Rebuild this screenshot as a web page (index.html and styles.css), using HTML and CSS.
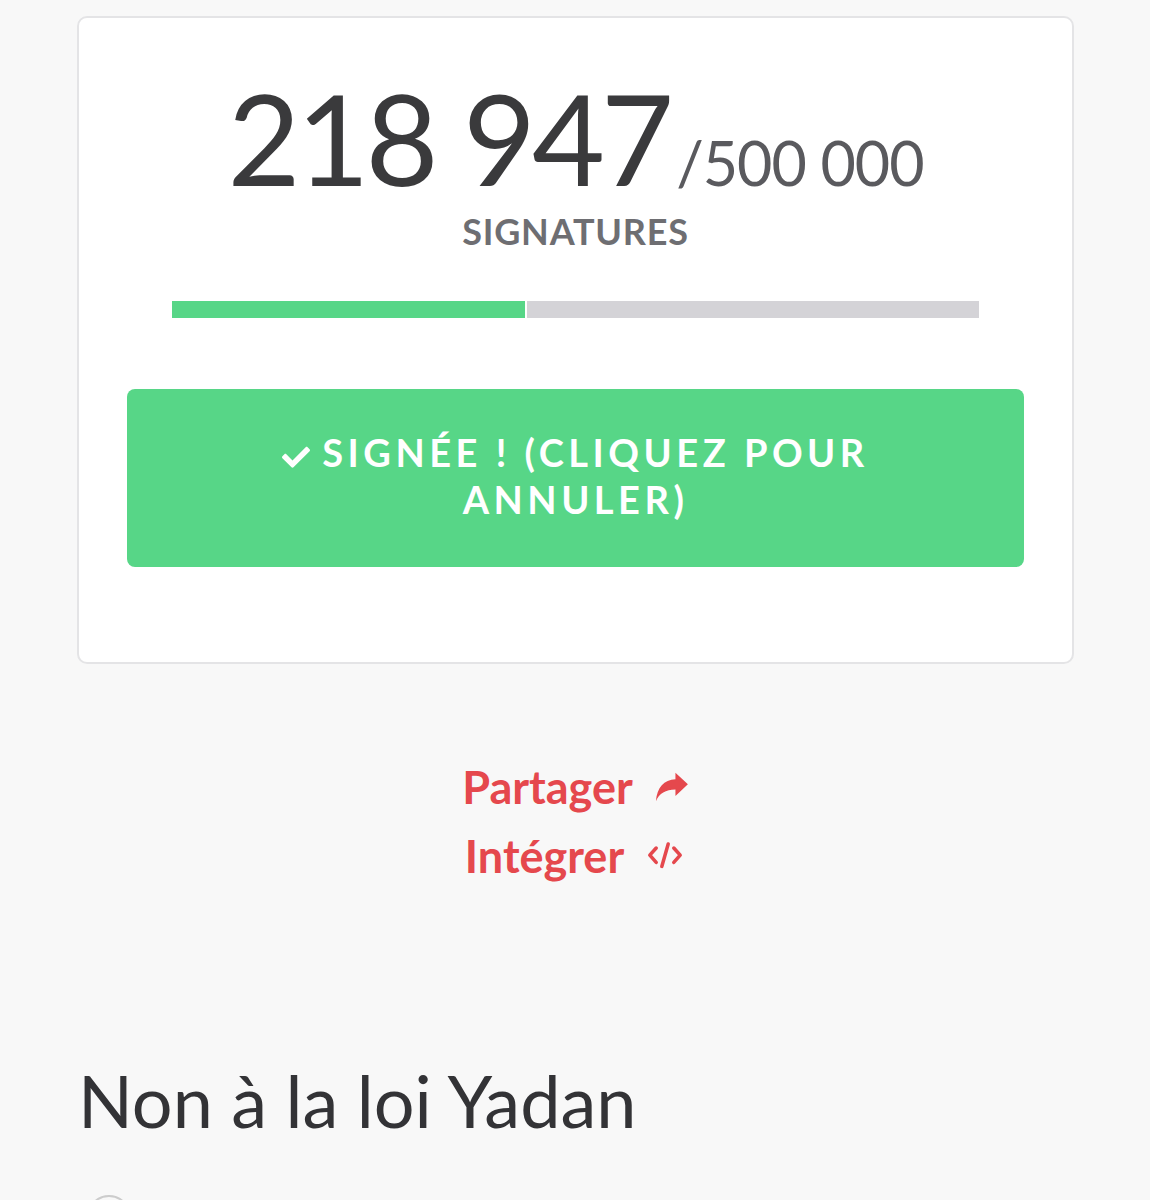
FILE: index.html
```html
<!DOCTYPE html>
<html lang="fr">
<head>
  <meta charset="UTF-8">
  <title>Non à la loi Yadan</title>
  <link rel="stylesheet" href="styles.css">
</head>
<body>
<div class="page">
  <div class="card">
    <div class="count">
      <span class="count-now">218 947</span><span class="count-goal">/500 000</span>
    </div>
    <div class="count-label">SIGNATURES</div>

    <div class="progress">
      <div class="progress-done" style="width: 43.8%"></div>
      <div class="progress-rest"></div>
    </div>

    <button class="sign-btn">
      <svg class="check" viewBox="0 0 512 420" width="28" height="23"><path d="M173.9 389.4l-166.4-166.4c-10-10-10-26.2 0-36.2l36.2-36.2c10-10 26.2-10 36.2 0L192 262.7 432.1 22.6c10-10 26.2-10 36.2 0l36.2 36.2c10 10 10 26.2 0 36.2l-294.4 294.4c-10 10-26.2 10-36.2 0z" fill="#fff"/></svg>SIGNÉE ! (CLIQUEZ POUR<br>ANNULER)
    </button>
  </div>

  <div class="links">
    <a class="link" href="#">Partager
      <svg viewBox="0 0 20 18" width="36" height="32"><path d="M19.5 7.5 L12.5 1 L12.5 4.6 C6 5 2.2 9 1.5 17 C3.4 12.6 7 10.4 12.5 10.4 L12.5 14 Z" fill="#e5484d"/></svg>
    </a>
    <a class="link" href="#">Intégrer
      <svg viewBox="0 0 24 20" width="42" height="32"><path d="M6.5 5 L2.5 9.5 L6.5 14 M17.5 5 L21.5 9.5 L17.5 14 M14 2.5 L10 16.5" fill="none" stroke="#e5484d" stroke-width="2.2" stroke-linecap="round" stroke-linejoin="round"/></svg>
    </a>
  </div>

  <h1 class="title">Non à la loi Yadan</h1>
  <div class="avatar"></div>
</div>
</body>
</html>
```

FILE: styles.css
```css
html, body { margin: 0; padding: 0; background: #f8f8f8; overflow: hidden; }
body { font-family: "Lato", "Open Sans", sans-serif; color: #3a3a3c; height: 1200px; }
.page { padding: 16px 76px 0 77px; }

.card { background: #fff; border: 2px solid #e4e4e6; border-radius: 10px; padding: 57px 48px 95px; text-align: center; }
.count { line-height: 1; white-space: nowrap; }
.count-now { font-size: 126px; font-weight: 400; letter-spacing: -4px; color: #3a3a3c; }
.count-goal { font-size: 61px; font-weight: 400; color: #5a5a5e; letter-spacing: -1px; margin-left: 6px; }
.count-label { font-size: 36px; font-weight: 700; color: #6e6e72; margin-top: 8px; letter-spacing: 0.8px; }

.progress { display: flex; gap: 2px; height: 17px; margin: 48px 45px 0; }
.progress-done { background: #57d687; }
.progress-rest { flex: 1; background: #d4d3d7; }

.sign-btn { display: block; width: 100%; margin-top: 71px; height: 178px; border: 0; border-radius: 8px; background: #57d687; color: #fff; font-family: inherit; font-size: 38px; font-weight: 700; letter-spacing: 4.5px; line-height: 47px; padding: 0 20px 4px; }
.check { vertical-align: -2px; margin-right: 12px; }

.links { display: flex; flex-direction: column; align-items: center; gap: 17px; margin-top: 97px; }
.link { color: #e5484d; text-decoration: none; font-size: 45px; font-weight: 700; display: flex; align-items: center; gap: 20px; line-height: 52px; }

.title { font-size: 72px; font-weight: 400; margin: 182px 0 0 1px; color: #333336; line-height: 1; }
.avatar { width: 40px; height: 40px; border-radius: 50%; border: 2px solid #ccc; margin: 59px 0 0 10px; }
```
